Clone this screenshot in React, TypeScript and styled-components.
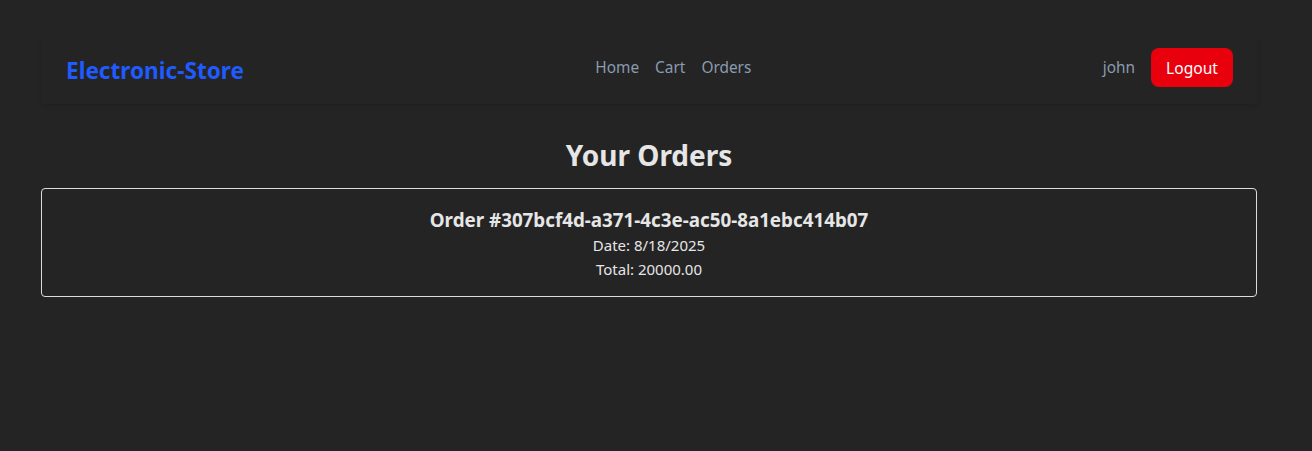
import React from "react";
import styled, { createGlobalStyle } from "styled-components";

const Global = createGlobalStyle`
  html, body { margin: 0; padding: 0; background: #242424; }
  body { font-family: "Segoe UI", "Noto Sans", sans-serif; color: #e6e6e6; }
`;

const Page = styled.div`
  padding: 36px 55px 0 41px;
`;

const Nav = styled.nav`
  height: 68px;
  box-sizing: border-box;
  display: flex;
  align-items: center;
  justify-content: space-between;
  padding: 0 24px 5px 25px;
  box-shadow: 0 2px 4px rgba(0, 0, 0, 0.12);
  background: #242424;
`;

const Logo = styled.div`
  font-size: 22.6px;
  font-weight: 700;
  color: #1f5bff;
  padding-top: 6px;
`;

const Links = styled.div`
  display: flex;
  gap: 16px;
`;

const NavLink = styled.a`
  font-size: 15.4px;
  color: #8b9bb0;
  text-decoration: none;
`;

const Right = styled.div`
  display: flex;
  align-items: center;
  gap: 16px;
`;

const User = styled.span`
  font-size: 15.4px;
  color: #8b9bb0;
`;

const LogoutButton = styled.button`
  height: 39px;
  width: 82px;
  padding: 0;
  border: none;
  border-radius: 8px;
  background: #e8000d;
  color: #ffffff;
  font-family: inherit;
  font-size: 15.6px;
`;

const Title = styled.h1`
  margin: 33px 0 15px;
  text-align: center;
  font-size: 28px;
  font-weight: 700;
  line-height: 36px;
`;

const Card = styled.div`
  border: 1px solid #dcdcdc;
  border-radius: 4px;
  padding: 18px 16px 15px;
  text-align: center;
`;

const OrderHead = styled.h3`
  margin: 0;
  font-size: 18.8px;
  font-weight: 700;
  line-height: 26px;
`;

const Line = styled.p`
  margin: 0;
  font-size: 15px;
  line-height: 24px;
`;

export default function App() {
  return (
    <>
      <Global />
      <Page>
        <Nav>
          <Logo>Electronic-Store</Logo>
          <Links>
            <NavLink href="#">Home</NavLink>
            <NavLink href="#">Cart</NavLink>
            <NavLink href="#">Orders</NavLink>
          </Links>
          <Right>
            <User>john</User>
            <LogoutButton>Logout</LogoutButton>
          </Right>
        </Nav>
        <Title>Your Orders</Title>
        <Card>
          <OrderHead>Order #307bcf4d-a371-4c3e-ac50-8a1ebc414b07</OrderHead>
          <Line>Date: 8/18/2025</Line>
          <Line>Total: 20000.00</Line>
        </Card>
      </Page>
    </>
  );
}
